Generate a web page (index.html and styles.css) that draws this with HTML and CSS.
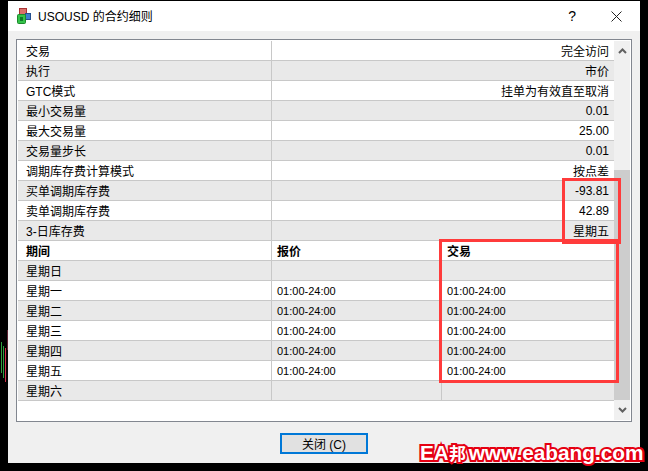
FILE: index.html
```html
<!doctype html>
<html lang="en">
<head>
    <meta charset="UTF-8">
    <title>USOUSD 的合约细则</title>
    <link rel="stylesheet" href="styles.css">
</head>
<body>
<div class="dialog">
    <div class="titlebar">
        <svg class="app-icon" width="16" height="16" viewBox="0 0 16 16">
            <rect x="3.5" y="0.5" width="7" height="6" fill="#d9706a" stroke="#a33"/>
            <rect x="9.5" y="5.5" width="5" height="6" fill="#3f7fd0" stroke="#25508f"/>
            <rect x="1.5" y="6.5" width="8" height="9" rx="1" fill="#35c24a" stroke="#1a8a2a"/>
            <rect x="4" y="9" width="3" height="4" fill="#0f7a2a"/>
        </svg>
        <span class="title">USOUSD 的合约细则</span>
        <span class="help">?</span>
        <svg class="close-x" width="11" height="11" viewBox="0 0 11 11">
            <path d="M0.5 0.5 L10.5 10.5 M10.5 0.5 L0.5 10.5" stroke="#222" stroke-width="1" fill="none"/>
        </svg>
    </div>
    <div class="content">
        <div class="frame">
            <div class="list">
                <div class="row"><div class="cell name">交易</div><div class="cell val">完全访问</div></div>
                <div class="row alt"><div class="cell name">执行</div><div class="cell val">市价</div></div>
                <div class="row"><div class="cell name">GTC模式</div><div class="cell val">挂单为有效直至取消</div></div>
                <div class="row alt"><div class="cell name">最小交易量</div><div class="cell val num">0.01</div></div>
                <div class="row"><div class="cell name">最大交易量</div><div class="cell val num">25.00</div></div>
                <div class="row alt"><div class="cell name">交易量步长</div><div class="cell val num">0.01</div></div>
                <div class="row"><div class="cell name">调期库存费计算模式</div><div class="cell val">按点差</div></div>
                <div class="row alt"><div class="cell name">买单调期库存费</div><div class="cell val num">-93.81</div></div>
                <div class="row"><div class="cell name">卖单调期库存费</div><div class="cell val num">42.89</div></div>
                <div class="row alt"><div class="cell name">3-日库存费</div><div class="cell val">星期五</div></div>
                <div class="row three head"><div class="cell">期间</div><div class="cell">报价</div><div class="cell">交易</div></div>
                <div class="row three alt"><div class="cell">星期日</div><div class="cell"></div><div class="cell"></div></div>
                <div class="row three"><div class="cell">星期一</div><div class="cell time">01:00-24:00</div><div class="cell time">01:00-24:00</div></div>
                <div class="row three alt"><div class="cell">星期二</div><div class="cell time">01:00-24:00</div><div class="cell time">01:00-24:00</div></div>
                <div class="row three"><div class="cell">星期三</div><div class="cell time">01:00-24:00</div><div class="cell time">01:00-24:00</div></div>
                <div class="row three alt"><div class="cell">星期四</div><div class="cell time">01:00-24:00</div><div class="cell time">01:00-24:00</div></div>
                <div class="row three"><div class="cell">星期五</div><div class="cell time">01:00-24:00</div><div class="cell time">01:00-24:00</div></div>
                <div class="row three alt"><div class="cell">星期六</div><div class="cell"></div><div class="cell"></div></div>
            </div>
            <div class="scrollbar">
                <svg class="arrow" width="9" height="6" viewBox="0 0 9 6"><path d="M1 5 L4.5 1.5 L8 5" stroke="#606060" stroke-width="2" fill="none"/></svg>
                <div class="track"><div class="thumb"></div></div>
                <svg class="arrow" width="9" height="6" viewBox="0 0 9 6"><path d="M1 1 L4.5 4.5 L8 1" stroke="#606060" stroke-width="2" fill="none"/></svg>
            </div>
        </div>
        <div class="buttons"><button class="close-btn" type="button">关闭 (C)</button></div>
    </div>
</div>
<div class="mark mark-swap"></div>
<div class="mark mark-hours"></div>
<div class="bar bar-green1"></div>
<div class="bar bar-green2"></div>
<div class="bar bar-red"></div>
<div class="bar bar-dim"></div>
<div class="watermark">EA<span class="bang">邦</span> www.eabang.com</div>
</body>
</html>
```

FILE: styles.css
```css
* {
    margin: 0;
    padding: 0;
    box-sizing: border-box;
}
body {
    width: 648px;
    height: 471px;
    background: #000;
    overflow: hidden;
    position: relative;
    font-family: "Liberation Sans", "Noto Sans CJK SC", sans-serif;
    font-size: 12px;
    color: #000;
}
.dialog {
    width: 632px;
    height: 462px;
    margin: 1px 0 0 8px;
    background: #f0f0f0;
    display: flex;
    flex-direction: column;
}
.titlebar {
    height: 30px;
    background: #fff;
    display: flex;
    align-items: center;
    padding: 0 18px 0 8px;
    flex-shrink: 0;
}
.app-icon {
    margin-right: 6px;
}
.title {
    flex: 1;
    font-size: 12px;
    position: relative;
    top: -1px;
}
.help {
    font-size: 14px;
    margin-right: 35px;
}
.content {
    flex: 1;
    padding: 8px 8px 0 8px;
}
.frame {
    height: 383px;
    border: 1px solid #828790;
    background: #fff;
    display: flex;
    padding: 1px;
}
.list {
    width: 596px;
}
.row {
    height: 20px;
    display: grid;
    grid-template-columns: 254px 1fr;
    background: #fff;
    border-bottom: 1px solid #c8c8c8;
    line-height: 16px;
}
.row.alt {
    background: #e9e9e9;
}
.row.three {
    grid-template-columns: 254px 170px 1fr;
}
.cell {
    padding: 3px 5px 0 8px;
    border-right: 1px solid #c8c8c8;
    white-space: nowrap;
    overflow: hidden;
}
.cell:last-child {
    border-right: 0;
}
.val {
    text-align: right;
}
.num {
    padding-top: 2px;
}
.time {
    font-size: 11px;
    padding: 2px 5px 0;
}
.head {
    font-weight: bold;
}
.head .cell:not(:first-child) {
    padding-left: 5px;
}
.scrollbar {
    flex: 1;
    display: flex;
    flex-direction: column;
    align-items: center;
    background: #f0f0f0;
}
.arrow {
    flex-shrink: 0;
    margin: 7px 0;
}
.track {
    flex: 1;
    width: 100%;
    display: flex;
    align-items: flex-end;
}
.thumb {
    width: 100%;
    height: 230px;
    background: #cdcdcd;
}
.buttons {
    display: flex;
    justify-content: center;
    padding-top: 11px;
}
.close-btn {
    width: 88px;
    height: 21px;
    background: #e1e1e1;
    border: 2px solid #0078d7;
    font-family: inherit;
    font-size: 12px;
}
.mark {
    position: absolute;
    border: 3px solid #ff3b3b;
}
.mark-swap {
    left: 562px;
    top: 178px;
    width: 59px;
    height: 66px;
}
.mark-hours {
    left: 439px;
    top: 239px;
    width: 180px;
    height: 144px;
}
.bar {
    position: absolute;
    width: 1px;
}
.bar-green1 {
    left: 1px;
    top: 342px;
    height: 31px;
    background: #2f9e3f;
}
.bar-green2 {
    left: 3px;
    top: 346px;
    height: 32px;
    background: #2f9e3f;
}
.bar-red {
    left: 5px;
    top: 348px;
    height: 34px;
    background: #d0304a;
}
.bar-dim {
    left: 7px;
    top: 330px;
    height: 20px;
    background: #5a2030;
}
.watermark {
    position: absolute;
    left: 420px;
    top: 441px;
    font-size: 20.8px;
    font-weight: bold;
    line-height: 24px;
    color: #fff;
    white-space: nowrap;
    word-spacing: -3px;
    -webkit-text-stroke: 4px #e60012;
    paint-order: stroke fill;
}
.bang {
    font-size: 17px;
}
```
